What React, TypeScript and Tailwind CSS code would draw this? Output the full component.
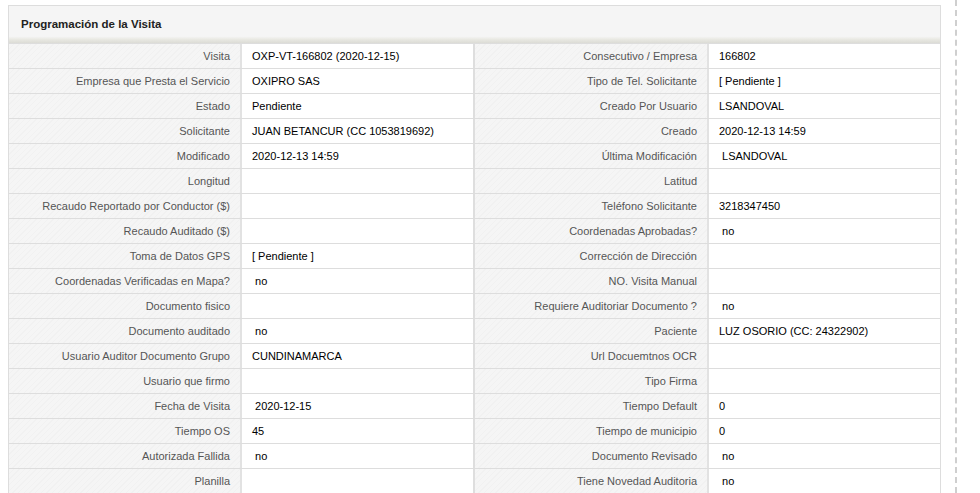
import React from 'react';

type Row = [string, string, string, string];

const rows: Row[] = [
  ['Visita', 'OXP-VT-166802 (2020-12-15)', 'Consecutivo / Empresa', '166802'],
  ['Empresa que Presta el Servicio', 'OXIPRO SAS', 'Tipo de Tel. Solicitante', '[ Pendiente ]'],
  ['Estado', 'Pendiente', 'Creado Por Usuario', 'LSANDOVAL'],
  ['Solicitante', 'JUAN BETANCUR (CC 1053819692)', 'Creado', '2020-12-13 14:59'],
  ['Modificado', '2020-12-13 14:59', 'Última Modificación', ' LSANDOVAL'],
  ['Longitud', '', 'Latitud', ''],
  ['Recaudo Reportado por Conductor ($)', '', 'Teléfono Solicitante', '3218347450'],
  ['Recaudo Auditado ($)', '', 'Coordenadas Aprobadas?', ' no'],
  ['Toma de Datos GPS', '[ Pendiente ]', 'Corrección de Dirección', ''],
  ['Coordenadas Verificadas en Mapa?', ' no', 'NO. Visita Manual', ''],
  ['Documento fisico', '', 'Requiere Auditoriar Documento ?', ' no'],
  ['Documento auditado', ' no', 'Paciente', 'LUZ OSORIO (CC: 24322902)'],
  ['Usuario Auditor Documento Grupo', 'CUNDINAMARCA', 'Url Docuemtnos OCR', ''],
  ['Usuario que firmo', '', 'Tipo Firma', ''],
  ['Fecha de Visita', ' 2020-12-15', 'Tiempo Default', '0'],
  ['Tiempo OS', '45', 'Tiempo de municipio', '0'],
  ['Autorizada Fallida', ' no', 'Documento Revisado', ' no'],
  ['Planilla', '', 'Tiene Novedad Auditoria', ' no'],
];

const Label = ({ text }: { text: string }) => (
  <div className="flex h-full items-center justify-end border-r-2 border-[#e2e2e2] bg-[repeating-linear-gradient(135deg,#f5f5f5_0px,#f5f5f5_3px,#f1f1f1_3px,#f1f1f1_4px)] pr-[10px] text-[#555]">
    {text}
  </div>
);

const Value = ({ text, divider }: { text: string; divider?: boolean }) => (
  <div
    className={
      'flex h-full items-center whitespace-pre bg-white pl-[10px] text-black' +
      (divider ? ' border-r-2 border-[#dedede]' : '')
    }
  >
    {text}
  </div>
);

export default function App() {
  return (
    <div className="h-[493px] overflow-hidden bg-white font-['Liberation_Sans',Arial,sans-serif] text-[11px]">
      <div className="h-full w-[957px] border-r-2 border-dashed border-[#cfcfcf] pl-2 pt-[5px]">
        <div className="w-[933px] border border-[#dddddd]">
          {/* Panel heading */}
          <div className="flex h-[37px] items-center bg-[linear-gradient(to_bottom,#f5f5f5_0%,#f5f5f5_82%,#e9e9e3_90%,#dcdcd6_100%)] pl-3 text-[11.5px] font-bold text-[#222]">
            Programación de la Visita
          </div>
          {/* Detail rows */}
          {rows.map((r, i) => (
            <div
              key={i}
              className="grid h-[25px] grid-cols-[233px_233px_234px_231px] border-t border-[#dddddd]"
            >
              <Label text={r[0]} />
              <Value text={r[1]} divider />
              <Label text={r[2]} />
              <Value text={r[3]} />
            </div>
          ))}
        </div>
      </div>
    </div>
  );
}
